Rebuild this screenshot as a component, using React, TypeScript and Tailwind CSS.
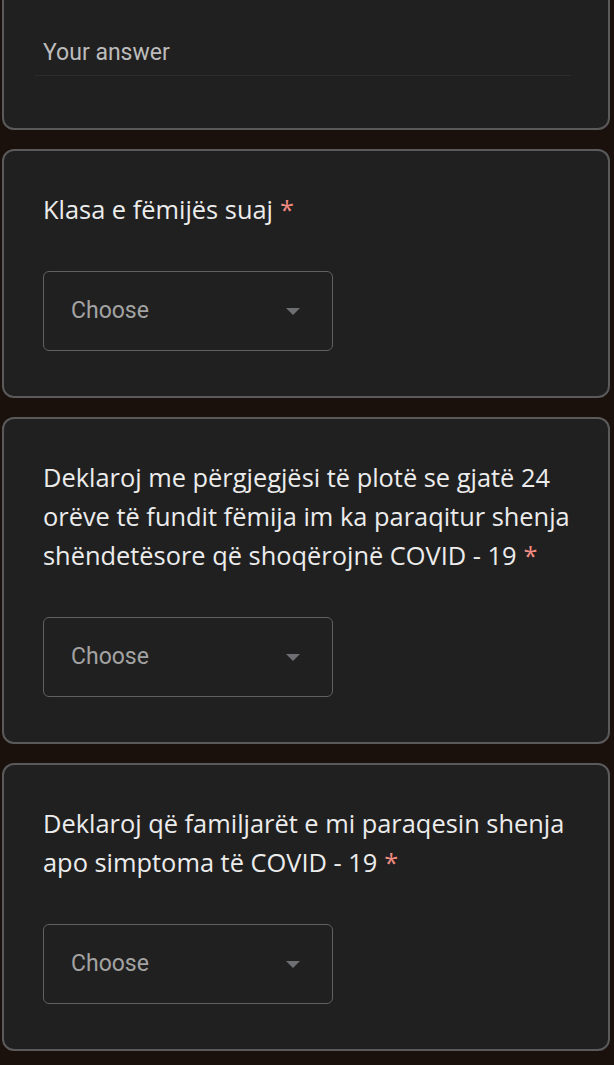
import React from 'react';

const titleFont = { fontFamily: '"Open Sans", Roboto, sans-serif' };

const Dropdown: React.FC = () => (
  <div className="mt-[42px] flex h-[80px] w-[290px] items-center justify-between rounded-[6px] border border-[#5f6062] pl-[27px] pr-[32px]">
    <span className="font-['Roboto'] text-[23px] text-[#a3a3a3]">Choose</span>
    <svg width="14" height="7" viewBox="0 0 14 7">
      <path d="M0 0 L14 0 L7 7 Z" fill="#6e6f72" />
    </svg>
  </div>
);

interface QuestionProps {
  title: string;
}

const Question: React.FC<QuestionProps> = ({ title }) => (
  <div className="rounded-[12px] border-2 border-[#5a5a5a] bg-[#202020] px-[39px] pb-[45px] pt-[39px]">
    <p className="-mr-[26px] text-[25.4px] leading-[39px] text-[#ececec]" style={titleFont}>
      {title}
      <span className="ml-[7px] text-[#f28b82]">*</span>
    </p>
    <Dropdown />
  </div>
);

export default function App() {
  return (
    <div className="min-h-[1065px] overflow-hidden bg-[#1a100c] pl-[2px] pr-[4px]">
      <div className="flex flex-col gap-[19px]">
        <div className="-mt-[20px] rounded-[12px] border-2 border-[#5a5a5a] bg-[#202020] px-[31px] pb-[52px] pt-[57px]">
          <div className="mr-[6px] border-b border-[#2c2c2c] pb-[8px] pl-[8px] font-['Roboto'] text-[23px] leading-[28px] text-[#bcbcbc]">
            Your answer
          </div>
        </div>
        <Question title="Klasa e fëmijës suaj" />
        <Question title="Deklaroj me përgjegjësi të plotë se gjatë 24 orëve të fundit fëmija im ka paraqitur shenja shëndetësore që shoqërojnë COVID - 19" />
        <Question title="Deklaroj që familjarët e mi paraqesin shenja apo simptoma të COVID - 19" />
      </div>
    </div>
  );
}
